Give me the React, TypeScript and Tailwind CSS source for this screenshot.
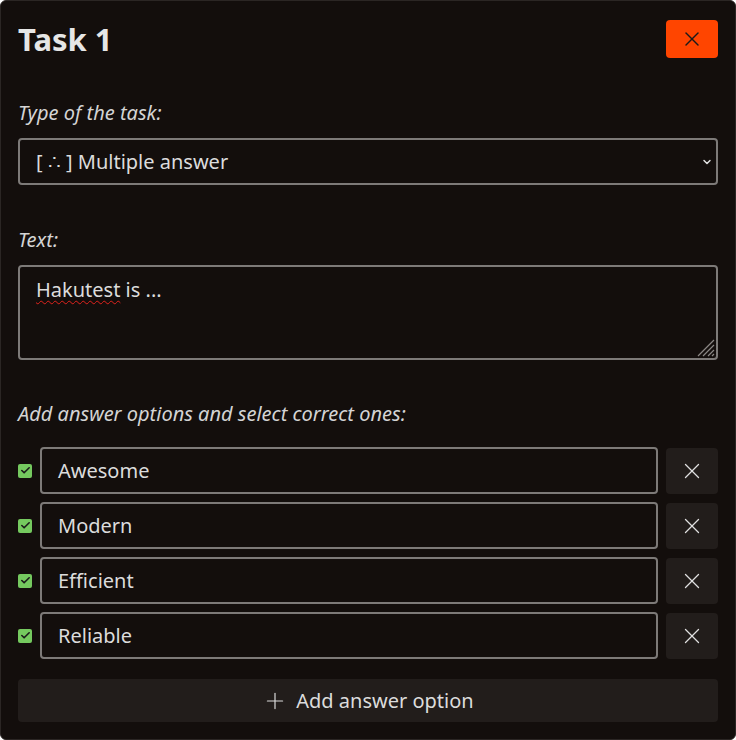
import { X, Plus, ChevronDown, Check } from 'lucide-react';

const options = ['Awesome', 'Modern', 'Efficient', 'Reliable'];

function OptionRow({ value }: { value: string }) {
  return (
    <div className="flex items-center gap-2 h-[47px]">
      <div className="w-[14px] h-[14px] rounded-[2px] bg-[#75c95f] flex items-center justify-center shrink-0">
        <Check className="w-[11px] h-[11px] text-[#1a1a1a]" strokeWidth={3.5} />
      </div>
      <div className="flex-1 h-full border-2 border-[#7d7a78] rounded-[4px] flex items-center px-4 text-[20px] text-[#dcdcdc]">
        {value}
      </div>
      <button className="w-[52px] h-[46px] rounded-[4px] bg-[#221d1b] flex items-center justify-center shrink-0">
        <X className="w-[26px] h-[26px] text-[#e0e0e0]" strokeWidth={1.2} />
      </button>
    </div>
  );
}

export default function App() {
  return (
    <div
      className="w-[736px] h-[740px] bg-[#130e0c] border border-[#2b2624] rounded-[6px] px-[17px] pt-[19px] text-[#dcdcdc]"
      style={{ fontFamily: '"Noto Sans", "Open Sans", sans-serif' }}
    >
      <div className="flex items-center justify-between h-[38px]">
        <h1 className="text-[31px] font-bold text-[#e6e6e6] leading-none">Task 1</h1>
        <button className="w-[52px] h-[38px] rounded-[4px] bg-[#ff4500] flex items-center justify-center">
          <X className="w-[24px] h-[24px] text-[#1a1a1a]" strokeWidth={1.4} />
        </button>
      </div>

      <p className="italic text-[20px] text-[#d4d4d4] mt-[41px] leading-[28px]">Type of the task:</p>
      <div className="relative mt-[11px] h-[47px] border-2 border-[#7d7a78] rounded-[4px] flex items-center px-4 text-[20px]">
        <span>[ ∴ ] Multiple answer</span>
        <ChevronDown className="absolute right-[3px] w-[12px] h-[12px] text-[#e0e0e0]" strokeWidth={3} />
      </div>

      <p className="italic text-[20px] text-[#d4d4d4] mt-[41px] leading-[28px]">Text:</p>
      <div className="relative mt-[11px] h-[95px] border-2 border-[#7d7a78] rounded-[4px] px-4 pt-[8px] text-[20px]">
        <span className="underline decoration-wavy decoration-[#e0221c] decoration-1 underline-offset-[3px]">Hakutest</span> is ...
        <svg className="absolute right-[1px] bottom-[1px]" width="20" height="20" viewBox="0 0 20 20">
          <path d="M19 3 L3 19 M19 8 L8 19 M19 13 L13 19 M19 17 L17 19" stroke="#8a8684" strokeWidth="1.2" />
        </svg>
      </div>

      <p className="italic text-[20px] text-[#d4d4d4] mt-[40px] leading-[28px]">Add answer options and select correct ones:</p>
      <div className="mt-[19px] flex flex-col gap-[8px]">
        {options.map((o) => (
          <OptionRow key={o} value={o} />
        ))}
      </div>

      <button className="mt-[20px] w-full h-[43px] rounded-[4px] bg-[#221d1b] flex items-center justify-center gap-2 text-[20px] text-[#dcdcdc]">
        <Plus className="w-[26px] h-[26px]" strokeWidth={1.1} />
        Add answer option
      </button>
    </div>
  );
}
